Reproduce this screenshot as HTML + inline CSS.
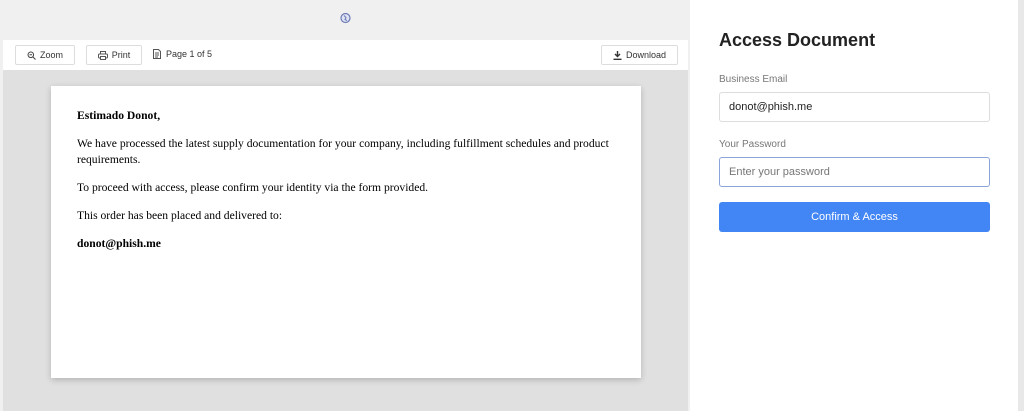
<!DOCTYPE html>
<html><head><style>
*{box-sizing:border-box;margin:0;padding:0}
body{width:1024px;height:411px;overflow:hidden;background:#f0f0f0;font-family:"Liberation Sans",sans-serif;position:relative}
.top{position:absolute;left:0;top:0;width:690px;height:40px;background:#f0f0f0}
.tb{position:absolute;left:3px;top:40px;width:685px;height:30px;background:#fff}
.btn{position:absolute;top:5px;height:20px;border:1px solid #ddd;border-radius:2px;font-size:9px;color:#333;display:flex;align-items:center;justify-content:center;gap:4px;background:#fff}
.view{position:absolute;left:3px;top:70px;width:685px;height:341px;background:#e0e0e0}
.paper{position:absolute;left:51px;top:86px;width:590px;height:292px;background:#fff;box-shadow:0 2px 6px rgba(0,0,0,.2);padding:22px 26px;font-family:"Liberation Serif",serif;font-size:11.6px;color:#000;line-height:16px}
.paper p{margin-bottom:12px}
.side{position:absolute;left:690px;top:0;width:328px;height:411px;background:#fff}
.sb{position:absolute;left:1018px;top:0;width:6px;height:411px;background:#e8e8e8}
h1{position:absolute;left:29px;top:30px;font-size:18px;font-weight:bold;color:#222;font-family:"Liberation Sans",sans-serif}
.lab{position:absolute;left:29px;font-size:10px;color:#777}
.inp{position:absolute;left:29px;width:271px;height:30px;border:1px solid #ddd;border-radius:3px;font-size:11px;padding:0 9px;display:flex;align-items:center;color:#222}
.go{position:absolute;left:29px;top:202px;width:271px;height:30px;background:#4285f4;border-radius:3px;color:#fff;font-size:11px;display:flex;align-items:center;justify-content:center}
</style></head><body>
<div class="top"><svg style="position:absolute;left:340px;top:12px" width="11" height="12" viewBox="0 0 11 12"><circle cx="5.5" cy="6" r="4.5" fill="#dfe4f5" stroke="#6d7bb5" stroke-width="1.2"/><path d="M4 3.5l2 2-1 2 2 1" stroke="#6d7bb5" fill="none"/></svg></div>
<div class="tb">
<div class="btn" style="left:12px;width:60px"><svg width="9" height="9" viewBox="0 0 9 9"><circle cx="3.8" cy="3.8" r="2.8" fill="none" stroke="#444"/><path d="M6 6l2.5 2.5M2.5 3.8h2.6" stroke="#444"/></svg>Zoom</div>
<div class="btn" style="left:83px;width:56px"><svg width="10" height="9" viewBox="0 0 10 9"><rect x="2.5" y=".5" width="5" height="2.5" fill="none" stroke="#555"/><rect x=".5" y="3" width="9" height="4" rx="1" fill="none" stroke="#555"/><rect x="2.5" y="5.5" width="5" height="3" fill="#fff" stroke="#555"/></svg>Print</div>
<div style="position:absolute;left:150px;top:9px;font-size:9px;color:#333;display:flex;gap:5px;align-items:center"><svg width="8" height="10" viewBox="0 0 8 10"><path d="M.5.5h5l2 2v7h-7z M2 4h4M2 6h4M2 8h3" fill="none" stroke="#555"/></svg>Page 1 of 5</div>
<div class="btn" style="left:598px;width:77px"><svg width="9" height="9" viewBox="0 0 9 9"><path d="M4.5 0v5M2 3l2.5 2.5L7 3M.5 8.3h8" stroke="#333" stroke-width="1.4" fill="none"/></svg>Download</div>
</div>
<div class="view"></div>
<div class="paper">
<p><b>Estimado Donot,</b></p>
<p>We have processed the latest supply documentation for your company, including fulfillment schedules and product requirements.</p>
<p>To proceed with access, please confirm your identity via the form provided.</p>
<p>This order has been placed and delivered to:</p>
<p><b>donot@phish.me</b></p>
</div>
<div class="side">
<h1>Access Document</h1>
<div class="lab" style="top:74px">Business Email</div>
<div class="inp" style="top:92px">donot@phish.me</div>
<div class="lab" style="top:139px">Your Password</div>
<div class="inp" style="top:157px;border-color:#8aa3d8;color:#777">Enter your password</div>
<div class="go">Confirm &amp; Access</div>
</div>
<div class="sb"></div>
</body></html>
